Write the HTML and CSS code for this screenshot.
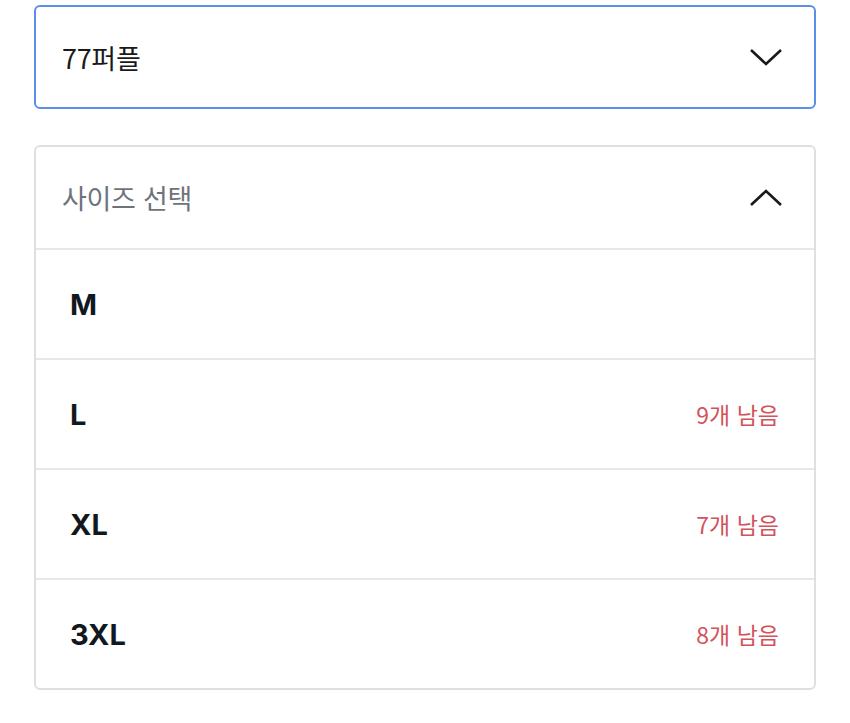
FILE: index.html
```html
<!DOCTYPE html>
<html lang="ko">
<head>
    <meta charset="UTF-8">
    <title>옵션 선택</title>
    <link rel="stylesheet" href="styles.css">
</head>
<body>
	<div class="page">
		<div class="select select-open">
			<span class="select-value">77퍼플</span>
			<svg class="chevron" width="34" height="18" viewBox="0 0 34 18"><path d="M2 2 L17 16 L32 2" fill="none" stroke="#1a1a1a" stroke-width="2.6"/></svg>
		</div>

		<div class="size-box">
			<div class="size-head">
				<span class="size-title">사이즈 선택</span>
				<svg class="chevron" width="34" height="18" viewBox="0 0 34 18"><path d="M2 16 L17 2 L32 16" fill="none" stroke="#1a1a1a" stroke-width="2.6"/></svg>
			</div>
			<div class="size-row">
				<span class="size-name">M</span>
			</div>
			<div class="size-row">
				<span class="size-name">L</span>
				<span class="size-left">9개 남음</span>
			</div>
			<div class="size-row">
				<span class="size-name">XL</span>
				<span class="size-left">7개 남음</span>
			</div>
			<div class="size-row">
				<span class="size-name">3XL</span>
				<span class="size-left">8개 남음</span>
			</div>
		</div>
	</div>
</body>
</html>
```

FILE: styles.css
```css
body{
	margin: 0;
	background: #fff;
	font-family: Inter, "Noto Sans CJK KR", sans-serif;
}
.page{
	padding: 5px 34px;
}
.select{
	display: flex;
	align-items: center;
	justify-content: space-between;
	height: 100px;
	border: 2px solid #5a8ee8;
	border-radius: 6px;
	padding: 0 31px 0 26px;
}
.select-value{
	font-family: "Noto Sans CJK KR", sans-serif;
	font-size: 27px;
	color: #1a1a1a;
	letter-spacing: -0.3px;
}
.size-box{
	margin-top: 36px;
	border: 2px solid #dedfe1;
	border-radius: 6px;
}
.size-head{
	display: flex;
	align-items: center;
	justify-content: space-between;
	height: 101px;
	padding: 0 31px 0 26px;
	border-bottom: 2px solid #e6e7e9;
}
.size-title{
	font-family: "Noto Sans CJK KR", sans-serif;
	font-size: 27px;
	color: #6e737b;
	letter-spacing: -0.3px;
}
.size-row{
	display: flex;
	align-items: center;
	justify-content: space-between;
	height: 108px;
	padding: 0 35px 0 34px;
	border-bottom: 2px solid #e6e7e9;
}
.size-row:last-child{
	border-bottom: none;
}
.size-name{
	font-size: 29px;
	font-weight: 700;
	color: #111820;
}
.size-left{
	font-family: "Noto Sans CJK KR", sans-serif;
	font-size: 23px;
	color: #d2535c;
}
```
